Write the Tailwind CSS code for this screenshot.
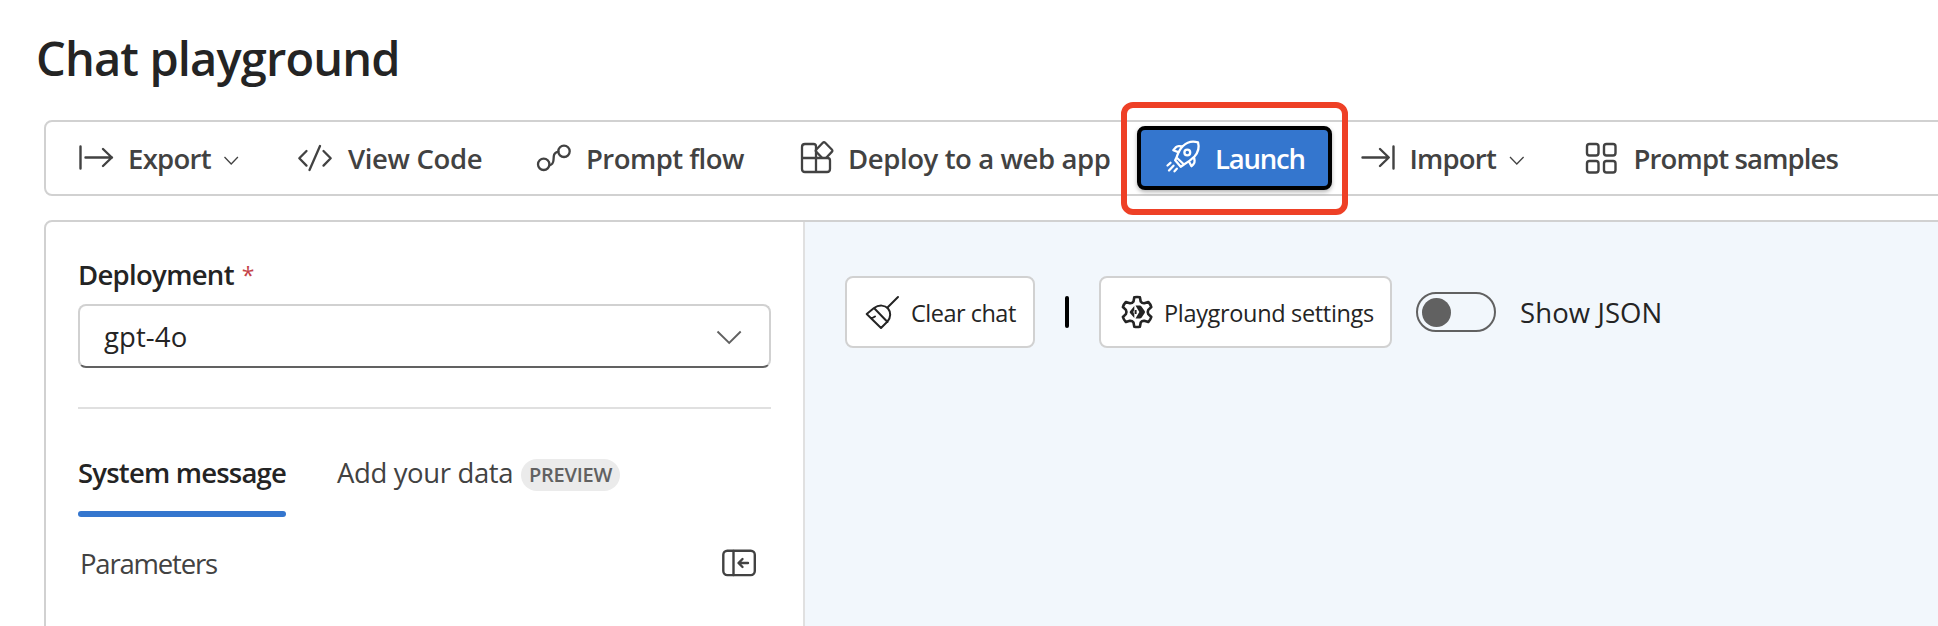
<!DOCTYPE html>
<html lang="en">
<head>
<meta charset="utf-8">
<title>Chat playground</title>
<script src="https://cdn.jsdelivr.net/npm/@tailwindcss/browser@4"></script>
</head>
<body class="h-[626px] w-[1938px] overflow-hidden bg-white font-['Open_Sans','Noto_Sans',sans-serif] text-[27.5px] text-[#242424]">
<div class="flex h-[626px] flex-col overflow-hidden">
  <h1 class="mt-7 ml-9 h-[60px] text-[47px] leading-[60px] font-semibold tracking-[-0.85px] whitespace-nowrap">Chat playground</h1>

  <!-- Toolbar -->
  <div class="mt-8 ml-11 flex h-[76px] w-[1920px] shrink-0 items-center rounded-lg border-2 border-[#d1d1d1] pl-[30px] leading-9 font-semibold whitespace-nowrap text-[#424242]">
    <div class="flex w-[220px] items-center">
      <svg class="size-10" viewBox="76 138 40 40" fill="none" stroke="currentColor" stroke-width="2.4" stroke-linecap="round" stroke-linejoin="round"><path d="M80.5 146.500V168.500M85.500 157.500H112M103 149l8.800 8.500-8.800 8.500"/></svg>
      <span class="mt-0.5 ml-3 w-[92px] tracking-[-0.7px]">Export</span>
      <svg class="mt-1 h-3 w-[22px]" viewBox="220 154 22 12" fill="none" stroke="currentColor" stroke-width="1.300"><path d="M224.500 157l6.700 7 6.700-7"/></svg>
    </div>
    <div class="flex w-[238px] items-center">
      <svg class="size-10" viewBox="296 138 40 40" fill="none" stroke="currentColor" stroke-width="2.300" stroke-linecap="round" stroke-linejoin="round"><path d="M306.500 151l-7.200 7.300 7.200 7.300M320 146l-10.500 24M323.500 151l7.200 7.300-7.200 7.300"/></svg>
      <span class="mt-0.5 ml-3 tracking-[-0.35px]">View Code</span>
    </div>
    <div class="flex w-[264px] items-center">
      <svg class="size-10" viewBox="534 138 40 40" fill="none" stroke="currentColor" stroke-width="2.300" stroke-linecap="round"><circle cx="543.700" cy="164.300" r="5.700"/><circle cx="564" cy="151.300" r="5.700"/><path d="M549.500 165.300c3-.6 3.800-2.300 4-5.300l.3-3.800c.2-2.600 1.700-4 4.600-4.600"/></svg>
      <span class="mt-0.5 ml-3 tracking-[-0.54px]">Prompt flow</span>
    </div>
    <div class="flex w-[339px] items-center">
      <svg class="size-10" viewBox="798 138 40 40" fill="none" stroke="currentColor" stroke-width="2.300" stroke-linejoin="round"><path d="M816 158V146.500q0-2.500-2.500-2.500H805q-3 0-3 3V169q0 3 3 3h22q3 0 3-3v-8.500q0-2.500-2.500-2.500H802M816 158v14"/><path d="M822.800 142.800q1.200-1.200 2.400 0l6.600 6.700q1.200 1.200 0 2.400l-5.800 6.100M822.800 142.800l-6.500 6.700q-1.200 1.200 0 2.400l6 6.100"/></svg>
      <span class="mt-0.5 ml-[10px] tracking-[-0.4px]">Deploy to a web app</span>
    </div>
    <div class="relative flex h-16 w-[195px] items-center rounded-lg border-4 border-black bg-[#3476ce] pl-[19px] text-white shadow-[0_2px_4px_rgba(0,0,0,0.3)]">
      <svg class="size-[50px]" viewBox="1160 134 50 50" fill="none" stroke="currentColor" stroke-width="2.300" stroke-linecap="round" stroke-linejoin="round"><path d="M1176.500 158.500C1178 154 1180 150 1183 147 1187.500 142.500 1193 141.800 1198 143.300 1199.500 148.500 1198.500 153 1194.500 157.500 1191.500 160.500 1188 163 1184 165.500zM1182 147.500l-2.800-.4c-1.600-.2-2.500.3-3.500 1.300l-2.400 2.800 5.500 2.200M1194 158l.6 3.700c.2 1.600-.3 2.600-1.300 3.700l-1.800 1.800-2.700-5M1175.200 161.200l5.500 6.500 3.300-2.200M1175.200 161.200l1.300-2.700M1167.500 166.500l3-2.700M1169 171.500l4.500-4.800M1174.500 172.300l2.300-2.600"/><circle cx="1187.300" cy="153.500" r="2.900"/></svg>
      <span class="mt-0.5 ml-[5px] tracking-[-1.2px]">Launch</span>
      <!-- Highlight frame around the launch button -->
      <div class="absolute -top-[28px] -left-[20.500px] h-[113px] w-[227px] rounded-xl border-[6px] border-[#ee4026]"></div>
    </div>
    <div class="ml-[26px] flex w-[224px] items-center">
      <svg class="size-10" viewBox="1358 138 40 40" fill="none" stroke="currentColor" stroke-width="2.400" stroke-linecap="round" stroke-linejoin="round"><path d="M1393.500 146.500V168.500M1362.500 157.500H1388.500M1380 149l8.800 8.500-8.800 8.500"/></svg>
      <span class="mt-0.5 ml-[11.500px] w-[96.500px] tracking-[-0.8px]">Import</span>
      <svg class="mt-1 h-3 w-[22px]" viewBox="1506 154 22 12" fill="none" stroke="currentColor" stroke-width="1.300"><path d="M1510 157l6.800 7 6.800-7"/></svg>
    </div>
    <div class="flex items-center">
      <svg class="size-10" viewBox="1582 138 40 40" fill="none" stroke="currentColor" stroke-width="2.400"><rect x="1587" y="144" width="11.500" height="11.500" rx="2.500"/><rect x="1604" y="144" width="11.500" height="11.500" rx="2.500"/><rect x="1587" y="161" width="11.500" height="11.500" rx="2.500"/><rect x="1604" y="161" width="11.500" height="11.500" rx="2.500"/></svg>
      <span class="mt-0.5 ml-[11.500px] tracking-[-0.85px]">Prompt samples</span>
    </div>
  </div>

  <!-- Workspace -->
  <div class="mt-6 ml-11 flex h-[440px] w-[1920px] shrink-0 overflow-hidden rounded-lg border-2 border-[#d1d1d1] whitespace-nowrap">
    <section class="w-[759px] shrink-0 border-r-2 border-[#e0e0e0] pt-[35px] pr-8 pl-8">
      <label class="flex h-9 items-center leading-9 font-semibold"><span class="tracking-[-0.69px]">Deployment</span><span class="ml-[8px] text-[23px] font-normal text-[#c4444a]">*</span></label>
      <div class="mt-[11px] flex h-16 w-[693px] items-center justify-between rounded-lg border-2 border-[#d1d1d1] border-b-[#616161] pr-[26px] pl-6 leading-9">
        <span class="mt-px tracking-[0.1px]">gpt-4o</span>
        <svg class="h-5 w-[28px]" viewBox="715 326 28 20" fill="none" stroke="#616161" stroke-width="1.900"><path d="M717.500 331.500l11.700 11.500 11.500-11.500"/></svg>
      </div>
      <div class="mt-[39px] h-0.5 w-[693px] bg-[#e0e0e0]"></div>
      <div class="mt-[46px] flex h-[62px] items-start leading-9">
        <div class="flex h-[62px] w-52 flex-col justify-between">
          <span class="font-semibold tracking-[-0.8px]">System message</span>
          <div class="h-1.5 rounded-full bg-[#3476ce]"></div>
        </div>
        <div class="ml-[51px] flex items-center text-[#424242]">
          <span class="w-[184px] tracking-[-0.37px]">Add your data</span>
          <span class="mt-[4px] flex h-8 w-[99px] items-center justify-center rounded-full bg-[#ebebeb] text-[20px] leading-8 font-semibold tracking-[-0.25px] text-[#616161]">PREVIEW</span>
        </div>
      </div>
      <div class="mt-7 flex h-9 items-center justify-between pr-3.5 leading-9 text-[#424242]">
        <span class="mt-px ml-0.5 tracking-[-1.2px]">Parameters</span>
        <svg class="h-9 w-9" viewBox="721 546 36 36" fill="none" stroke="currentColor" stroke-width="2.400" stroke-linecap="round" stroke-linejoin="round"><rect x="723.300" y="551.800" width="31.500" height="24.300" rx="4"/><path d="M733.500 552v24M748 564h-9M742.500 560l-4 4 4 4"/></svg>
      </div>
    </section>
    <section class="flex flex-1 items-start bg-[#f2f7fc] pt-[54px] pl-10">
      <div class="flex h-[72px] w-[190px] items-center rounded-lg border-2 border-[#d1d1d1] bg-white pl-4 text-[23.5px]">
        <svg class="size-10" viewBox="863 292 40 40" fill="none" stroke="currentColor" stroke-width="2" stroke-linecap="round" stroke-linejoin="round"><path d="M898 297l-10.500 10.500M874 308c5-3.500 11-3 14 .5 3 3.500 3 9-.5 13L881 328l-14.300-14zM874 308l13.500 14M871.500 318.500l3.500-2"/></svg>
        <span class="mt-[3px] ml-2 tracking-[-0.5px]">Clear chat</span>
      </div>
      <div class="mt-5 ml-[30px] h-8 w-1 rounded-xs bg-black"></div>
      <div class="ml-[30px] flex h-[72px] w-[293px] items-center rounded-lg border-2 border-[#d1d1d1] bg-white pl-4 text-[23.5px]">
        <svg class="size-10" viewBox="1117 292 40 40" fill="none" stroke="currentColor" stroke-width="2.600" stroke-linejoin="round"><path d="M1134.300 297.300q2.800-.6 5.600 0l.8 4.200q1.300 2 3.600 1.800l4-1.300q2.200 2.200 3 5l-3 2.900q-1.100 2.100 0 4.200l3 2.900q-.8 2.800-3 5l-4-1.300q-2.300-.2-3.600 1.800l-.8 4.200q-2.800.6-5.600 0l-.8-4.200q-1.300-2-3.600-1.800l-4 1.300q-2.200-2.200-3-5l3-2.900q1.100-2.100 0-4.200l-3-2.900q.8-2.800 3-5l4 1.300q2.300.2 3.600-1.800z"/><path fill="currentColor" stroke="none" d="M1135.500 305.500h4.200q1.200 0 1.800.9l3.200 4.700q.6.900 0 1.800l-3.200 4.800q-.6.800-1.800.8h-4.200l3.800-6.500zM1134.300 306v3.500l-1 2.500 1 2.500v3.500l-4.300-5q-.7-.9 0-1.800zM1134.600 310h2v4h-2z"/></svg>
        <span class="mt-[3px] ml-[7px] tracking-[-0.33px]">Playground settings</span>
      </div>
      <div class="mt-4 ml-6 flex h-10 w-20 items-center rounded-full border-2 border-[#616161] pl-[3.500px]"><div class="size-[29px] rounded-full bg-[#616161]"></div></div>
      <span class="mt-[19px] ml-6 leading-9 tracking-[0.1px]">Show JSON</span>
    </section>
  </div>
</div>
</body>
</html>
